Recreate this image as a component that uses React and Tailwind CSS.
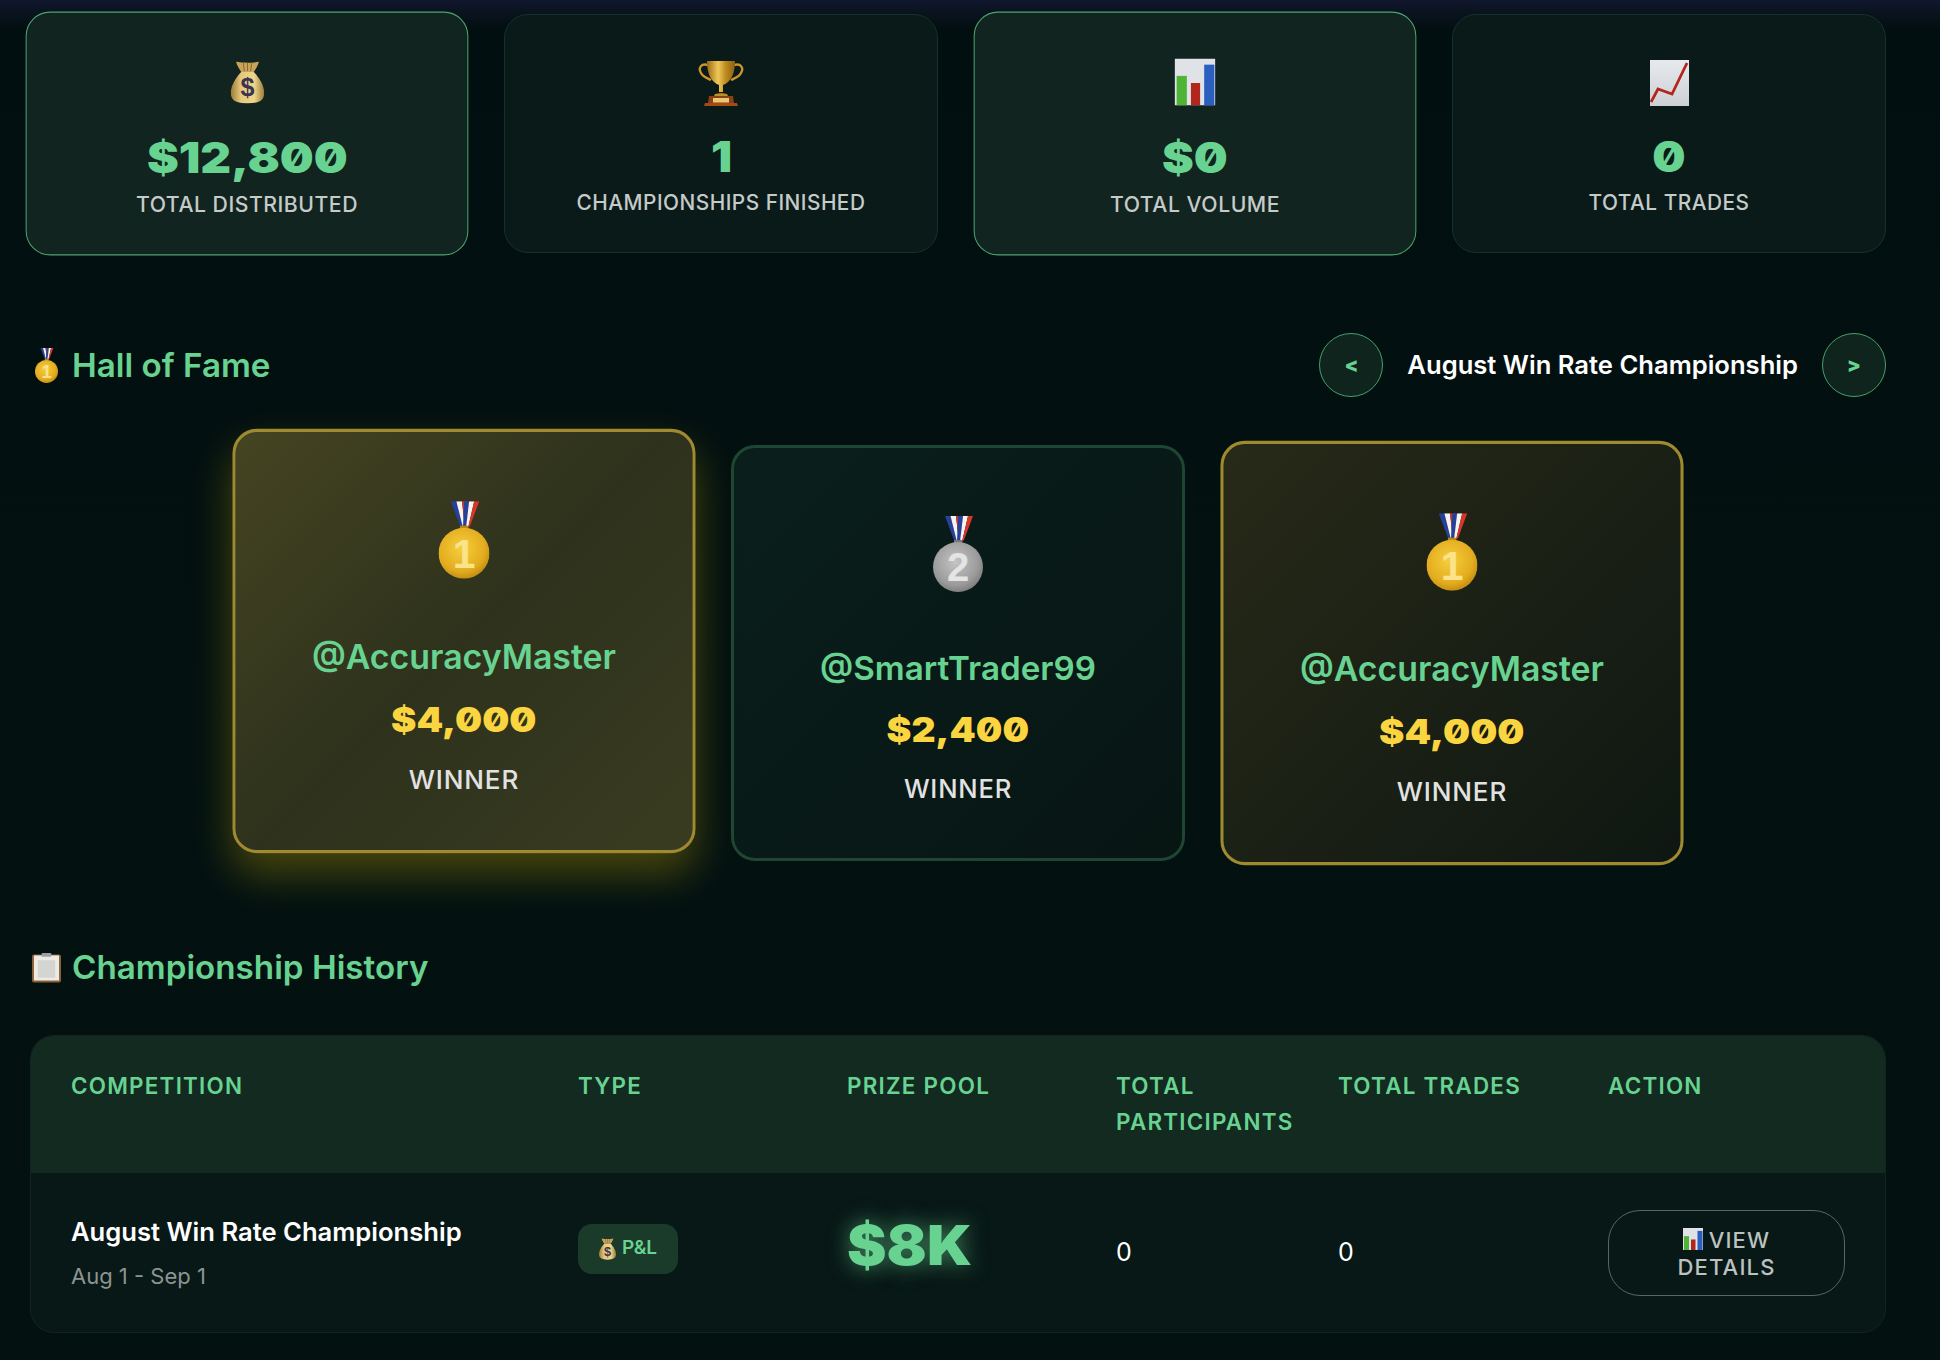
import React from 'react';

const numFont = "font-['Inter',sans-serif] font-black [font-feature-settings:'zero']";

function MoneyBag({className}) {
    return (
        <svg className={className} viewBox="0 0 32 40">
            <defs>
                <linearGradient id="bagFill" x1="0" x2="1" y1="0" y2="0">
                    <stop offset="0" stopColor="#9c7a38"/>
                    <stop offset="0.3" stopColor="#e4c97c"/>
                    <stop offset="0.7" stopColor="#efd68c"/>
                    <stop offset="1" stopColor="#9c7a38"/>
                </linearGradient>
            </defs>
            <path d="M5 0 C11 1.500 21 1.500 27 0 C26 4 24 7 22 10 H10 C8 7 6 4 5 0Z" fill="#c9a458"/>
            <path d="M12 1 L13 9 M16 1 V9 M20 1 L19 9" stroke="#8d6c30" strokeWidth="1"/>
            <path d="M10 10 H22 C27 15 32 23 32 30 C32 37 27 40 16 40 C5 40 0 37 0 30 C0 23 5 15 10 10Z" fill="url(#bagFill)"/>
            <text x="16" y="33" textAnchor="middle" fontSize="24" fontWeight="700" fill="#3b3350" fontFamily="Liberation Sans, sans-serif">$</text>
        </svg>
    );
}

function Trophy({className}) {
    return (
        <svg className={className} viewBox="0 0 46 46">
            <defs>
                <linearGradient id="cupFill" x1="0" x2="1" y1="0" y2="0">
                    <stop offset="0" stopColor="#9a6c12"/>
                    <stop offset="0.4" stopColor="#f0c85a"/>
                    <stop offset="0.65" stopColor="#c08f22"/>
                    <stop offset="1" stopColor="#8a5f10"/>
                </linearGradient>
            </defs>
            <path d="M10 5 C3 3 0 8 3 13 C5 17 9 18 13 20 M36 5 C43 3 46 8 43 13 C41 17 37 18 33 20" fill="none" stroke="#c8962a" strokeWidth="2.400"/>
            <path d="M9 1 H37 C37 14 33 22 25 25 V32 H21 V25 C13 22 9 14 9 1Z" fill="url(#cupFill)"/>
            <path d="M17 34 C20 33 26 33 29 34 L30 36 H16Z" fill="#c08f22"/>
            <path d="M11 36 H35 L36 43 H10Z" fill="#8a3f14"/>
            <rect x="15" y="38" width="16" height="4.500" fill="#e7c873"/>
            <path d="M7 43 H39 L40 46 H6Z" fill="#a34a17"/>
        </svg>
    );
}

function BarChart({className}) {
    return (
        <svg className={className} viewBox="0 0 40 46" preserveAspectRatio="none">
            <rect width="40" height="46" fill="#dfe3e8"/>
            <rect x="2" y="17" width="10" height="29" fill="#4fb336"/>
            <rect x="16" y="24" width="9" height="22" fill="#b3261c"/>
            <rect x="29" y="6" width="10" height="40" fill="#2a5fc0"/>
        </svg>
    );
}

function ChartUp({className}) {
    return (
        <svg className={className} viewBox="0 0 39 46">
            <defs>
                <linearGradient id="chartBg" x1="0" x2="0" y1="0" y2="1">
                    <stop offset="0" stopColor="#e6e9ee"/>
                    <stop offset="1" stopColor="#cdd1d6"/>
                </linearGradient>
            </defs>
            <rect width="39" height="46" fill="url(#chartBg)"/>
            <path d="M1 42 L8 29 L22 34 L37 3" fill="none" stroke="#b3261c" strokeWidth="2.800"/>
        </svg>
    );
}

function Clipboard({className}) {
    return (
        <svg className={className} viewBox="0 0 30 32">
            <rect x="0" y="3" width="30" height="29" rx="2" fill="#8b5e34"/>
            <rect x="2" y="4" width="26" height="26" fill="#eceae4"/>
            <rect x="6" y="9" width="18" height="18" fill="#d4d4d0"/>
            <rect x="10" y="1.500" width="10" height="4" rx="1" fill="#9aa0a6"/>
        </svg>
    );
}

function Medal({place, className}) {
    const id = place === 1 ? 'goldDisc' : 'silverDisc';
    const stops = place === 1 ? ['#f5cf3d', '#e3ac1f', '#b9860f'] : ['#c4c4c4', '#9b9b9b', '#777777'];
    return (
        <svg className={className} viewBox="0 0 50 76">
            <defs>
                <radialGradient id={id} cx="0.45" cy="0.4" r="0.65">
                    <stop offset="0" stopColor={stops[0]}/>
                    <stop offset="0.7" stopColor={stops[1]}/>
                    <stop offset="1" stopColor={stops[2]}/>
                </radialGradient>
            </defs>
            <polygon points="12,0 17.500,0 24,26 21,24" fill="#27409a"/>
            <polygon points="17.500,0 23,0 26,26 24,26" fill="#f4f4f4"/>
            <polygon points="23,0 28,0 28,26 26,26" fill="#d9352a"/>
            <polygon points="25,0 30,0 27,26 24,26" fill="#27409a"/>
            <polygon points="30,0 35,0 29,26 27,26" fill="#f4f4f4"/>
            <polygon points="35,0 40,0 31,24 29,26" fill="#d9352a"/>
            <rect x="21" y="24" width="8" height="3" fill={stops[2]}/>
            <circle cx="25" cy="51" r="25" fill={`url(#${id})`}/>
            <text x="25" y="65" textAnchor="middle" fontSize="40" fontWeight="700" fill={place === 1 ? '#fbe38a' : '#e4e4e4'} fontFamily="Liberation Sans, sans-serif">{place}</text>
        </svg>
    );
}

function StatCard({icon, value, label, active}) {
    return (
        <div className={`flex flex-col items-center rounded-[24px] border pt-[45px] pb-[37px] ${active ? 'scale-[1.02] border-[#4aa56e] bg-[#12241f]' : 'border-[#16302a] bg-[#0a1a19]'}`}>
            <div className="flex h-[46px] items-center justify-center">{icon}</div>
            <div className={`mt-[29px] scale-x-[1.115] text-[42px] leading-[44px] text-[#68d391] ${numFont}`}>{value}</div>
            <div className="mt-[12px] text-[20.8px] leading-[24px] font-medium tracking-[0.5px] text-[#c5cbc9] uppercase">{label}</div>
        </div>
    );
}

function WinnerCard({place, name, prize, style}) {
    const variants = {
        top: 'scale-[1.02] -translate-y-3 border-[#a08a30] bg-[linear-gradient(135deg,#454422,#2e321c_50%,#3a3c21)] shadow-[0_20px_40px_rgba(255,215,0,0.27)]',
        plain: 'border-[#1f4632] bg-[linear-gradient(135deg,#0a1f1c,#071513)]',
        gold: 'scale-[1.02] border-[#a08a30] bg-[linear-gradient(135deg,#282a18,#0e1712)]',
    };
    return (
        <div className={`flex flex-col items-center rounded-[24px] border-[3px] pt-[68px] pb-[54px] ${variants[style]}`}>
            <Medal place={place} className="h-[76px] w-[50px]"/>
            <div className="mt-[56px] text-[33.2px] leading-[40px] font-semibold text-[#68d391]">{name}</div>
            <div className={`mt-[22px] scale-x-[1.1] text-[34px] leading-[40px] text-[#fbd540] ${numFont}`}>{prize}</div>
            <div className="mt-[24px] text-[25.6px] leading-[30px] font-medium tracking-[0.8px] text-[#e2e2e2]">WINNER</div>
        </div>
    );
}

function NavButton({children}) {
    return (
        <button className="flex size-[64px] items-center justify-center rounded-full border border-[#45a069] bg-[#0f241d] text-[20px] font-black text-[#68d391]">
            {children}
        </button>
    );
}

export default function App() {
    const headers = ['Competition', 'Type', 'Prize Pool', 'Total Participants', 'Total Trades', 'Action'];

    return (
        <div className="h-[1360px] overflow-hidden bg-[linear-gradient(180deg,#11162f_0,#0a1420_10px,#020f10_30px,#031211_100%)] pt-[14px] pr-[54px] pl-[30px] font-['Inter',sans-serif]">
            <div className="grid grid-cols-4 gap-10">
                <StatCard active icon={<MoneyBag className="h-[41px] w-[33px]"/>} value="$12,800" label="Total Distributed"/>
                <StatCard icon={<Trophy className="size-[46px]"/>} value="1" label="Championships Finished"/>
                <StatCard active icon={<BarChart className="h-[46px] w-[40px]"/>} value="$0" label="Total Volume"/>
                <StatCard icon={<ChartUp className="h-[46px] w-[39px]"/>} value="0" label="Total Trades"/>
            </div>

            <div className="mt-[80px] flex items-center justify-between">
                <h2 className="flex items-center text-[33.2px] leading-[52px] font-semibold text-[#68d391]">
                    <Medal place={1} className="mr-[14px] ml-[5px] h-[35px] w-[23px]"/>
                    Hall of Fame
                </h2>
                <div className="flex items-center gap-6">
                    <NavButton>&lt;</NavButton>
                    <span className="text-[25.6px] font-semibold text-white">August Win Rate Championship</span>
                    <NavButton>&gt;</NavButton>
                </div>
            </div>

            <div className="mt-[48px] grid grid-cols-3 gap-10 px-[207px]">
                <WinnerCard place={1} name="@AccuracyMaster" prize="$4,000" style="top"/>
                <WinnerCard place={2} name="@SmartTrader99" prize="$2,400" style="plain"/>
                <WinnerCard place={1} name="@AccuracyMaster" prize="$4,000" style="gold"/>
            </div>

            <h2 className="mt-[80px] flex items-center text-[33.2px] leading-[52px] font-semibold text-[#68d391]">
                <Clipboard className="mr-[11px] ml-[2px] h-[32px] w-[29px]"/>
                Championship History
            </h2>

            <div className="mt-[42px] overflow-hidden rounded-[24px] border border-[#10251f] bg-[#081816]">
                <div className="grid grid-cols-[507px_269px_269px_222px_270px_1fr] bg-[#132a21] pt-[32px] pb-[33px]">
                    {headers.map(h => (
                        <div key={h} className="pr-[30px] pl-[40px] text-[22.4px] leading-[36px] font-semibold tracking-[1.25px] text-[#68d391] uppercase">{h}</div>
                    ))}
                </div>
                <div className="grid h-[159px] grid-cols-[507px_269px_269px_222px_270px_1fr] items-center">
                    <div className="pl-[40px]">
                        <div className="text-[25.6px] leading-[40px] font-semibold text-white">August Win Rate Championship</div>
                        <div className="mt-[6px] text-[22px] leading-[36px] text-[#8c9492]">Aug 1 - Sep 1</div>
                    </div>
                    <div className="pl-[40px]">
                        <span className="mb-[8px] inline-flex h-[50px] w-[100px] items-center justify-center gap-[6px] rounded-[14px] bg-[#1a3a2a] text-[19px] font-semibold text-[#68d391]">
                            <MoneyBag className="h-[22px] w-[17px]"/>
                            P&amp;L
                        </span>
                    </div>
                    <div className="pl-[40px]">
                        <div className={`mb-[14px] origin-left scale-x-[1.08] text-[55px] text-[#68d391] [text-shadow:0_0_20px_rgba(104,211,145,0.6)] ${numFont}`}>$8K</div>
                    </div>
                    <div className="pl-[40px] text-[25px] text-white">0</div>
                    <div className="pl-[40px] text-[25px] text-white">0</div>
                    <div className="pl-[40px]">
                        <button className="h-[86px] w-[237px] rounded-[32px] border border-[#5b6563] px-[40px] pt-[2px] text-[22px] leading-[27px] font-medium tracking-[1.2px] text-[#bcc2c0]">
                            <BarChart className="mr-[6px] inline-block h-[22px] w-[20px] align-[-2px]"/>
                            VIEW DETAILS
                        </button>
                    </div>
                </div>
            </div>
        </div>
    );
}
